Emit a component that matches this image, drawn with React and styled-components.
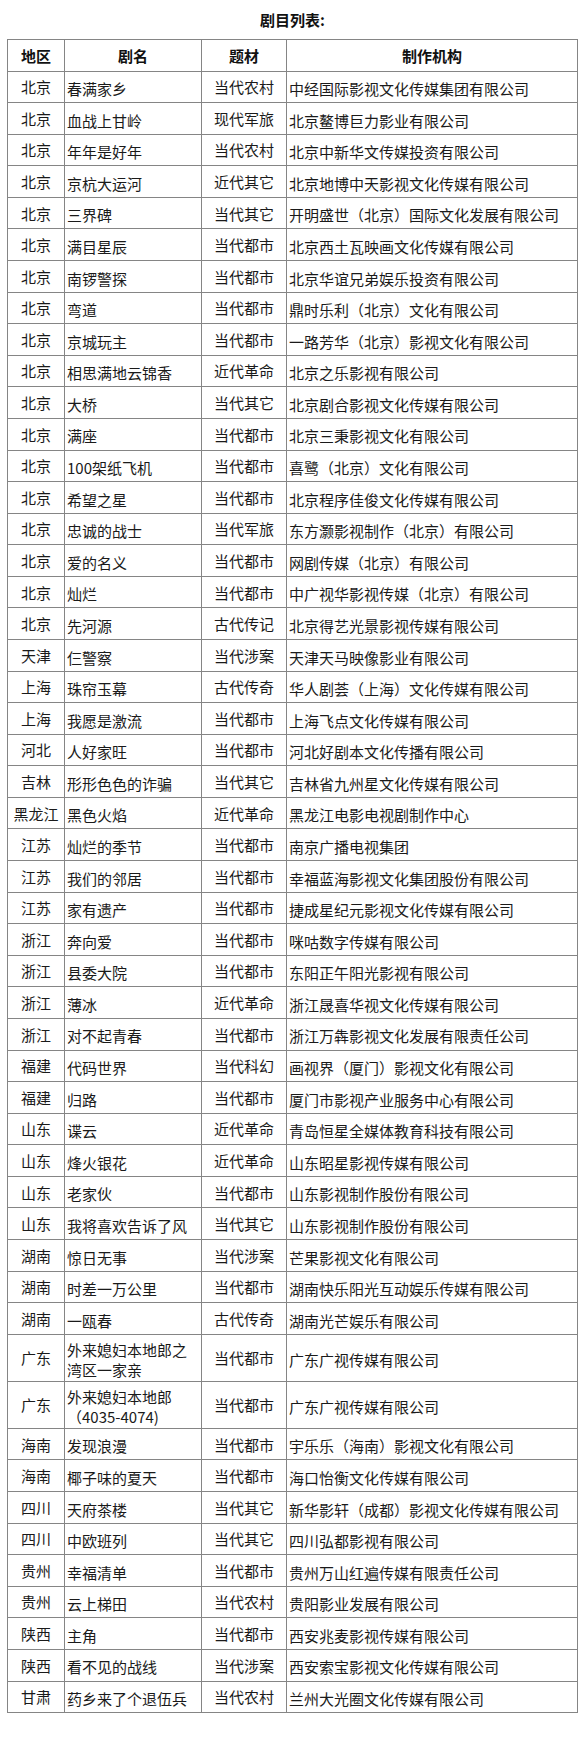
import React from "react";
import styled, { createGlobalStyle } from "styled-components";

const GlobalStyle = createGlobalStyle`
  html, body {
    margin: 0;
    padding: 0;
    background: #fff;
  }
  body {
    font-family: "Noto Sans CJK SC", "Noto Sans", "Liberation Sans", sans-serif;
    color: #1a1a1a;
  }
`;

const Page = styled.div`
  width: 585px;
  min-height: 1752px;
  background: #fff;
`;

const Title = styled.h2`
  margin: 0;
  padding: 10px 0 9px;
  font-size: 15px;
  line-height: 20px;
  font-weight: 700;
  text-align: center;
  color: #111;
`;

const Table = styled.table`
  width: 550px;
  margin: 0 auto;
  border-collapse: collapse;
  table-layout: fixed;
  font-size: 15px;
`;

const Th = styled.th`
  width: ${(p) => p.$w}px;
  border: 1px solid #858585;
  padding: 5.7px 2px;
  line-height: 19.2px;
  font-weight: 700;
  text-align: center;
  color: #111;
`;

const Td = styled.td`
  border: 1px solid #858585;
  padding: 5.7px ${(p) => (p.$align === "center" ? "2px" : "1px 2px")};
  padding-left: 2px;
  line-height: 19.2px;
  font-weight: 400;
  text-align: ${(p) => p.$align || "left"};
  vertical-align: middle;
  color: #1a1a1a;
`;

const columns = [
  { label: "地区", width: 52 },
  { label: "剧名", width: 132 },
  { label: "题材", width: 80 },
  { label: "制作机构", width: 286 },
];

const rows = [
  ["北京", "春满家乡", "当代农村", "中经国际影视文化传媒集团有限公司"],
  ["北京", "血战上甘岭", "现代军旅", "北京鳌博巨力影业有限公司"],
  ["北京", "年年是好年", "当代农村", "北京中新华文传媒投资有限公司"],
  ["北京", "京杭大运河", "近代其它", "北京地博中天影视文化传媒有限公司"],
  ["北京", "三界碑", "当代其它", "开明盛世（北京）国际文化发展有限公司"],
  ["北京", "满目星辰", "当代都市", "北京西土瓦映画文化传媒有限公司"],
  ["北京", "南锣警探", "当代都市", "北京华谊兄弟娱乐投资有限公司"],
  ["北京", "弯道", "当代都市", "鼎时乐利（北京）文化有限公司"],
  ["北京", "京城玩主", "当代都市", "一路芳华（北京）影视文化有限公司"],
  ["北京", "相思满地云锦香", "近代革命", "北京之乐影视有限公司"],
  ["北京", "大桥", "当代其它", "北京剧合影视文化传媒有限公司"],
  ["北京", "满座", "当代都市", "北京三秉影视文化有限公司"],
  ["北京", "100架纸飞机", "当代都市", "喜鹭（北京）文化有限公司"],
  ["北京", "希望之星", "当代都市", "北京程序佳俊文化传媒有限公司"],
  ["北京", "忠诚的战士", "当代军旅", "东方灏影视制作（北京）有限公司"],
  ["北京", "爱的名义", "当代都市", "网剧传媒（北京）有限公司"],
  ["北京", "灿烂", "当代都市", "中广视华影视传媒（北京）有限公司"],
  ["北京", "先河源", "古代传记", "北京得艺光景影视传媒有限公司"],
  ["天津", "仨警察", "当代涉案", "天津天马映像影业有限公司"],
  ["上海", "珠帘玉幕", "古代传奇", "华人剧荟（上海）文化传媒有限公司"],
  ["上海", "我愿是激流", "当代都市", "上海飞点文化传媒有限公司"],
  ["河北", "人好家旺", "当代都市", "河北好剧本文化传播有限公司"],
  ["吉林", "形形色色的诈骗", "当代其它", "吉林省九州星文化传媒有限公司"],
  ["黑龙江", "黑色火焰", "近代革命", "黑龙江电影电视剧制作中心"],
  ["江苏", "灿烂的季节", "当代都市", "南京广播电视集团"],
  ["江苏", "我们的邻居", "当代都市", "幸福蓝海影视文化集团股份有限公司"],
  ["江苏", "家有遗产", "当代都市", "捷成星纪元影视文化传媒有限公司"],
  ["浙江", "奔向爱", "当代都市", "咪咕数字传媒有限公司"],
  ["浙江", "县委大院", "当代都市", "东阳正午阳光影视有限公司"],
  ["浙江", "薄冰", "近代革命", "浙江晟喜华视文化传媒有限公司"],
  ["浙江", "对不起青春", "当代都市", "浙江万犇影视文化发展有限责任公司"],
  ["福建", "代码世界", "当代科幻", "画视界（厦门）影视文化有限公司"],
  ["福建", "归路", "当代都市", "厦门市影视产业服务中心有限公司"],
  ["山东", "谍云", "近代革命", "青岛恒星全媒体教育科技有限公司"],
  ["山东", "烽火银花", "近代革命", "山东昭星影视传媒有限公司"],
  ["山东", "老家伙", "当代都市", "山东影视制作股份有限公司"],
  ["山东", "我将喜欢告诉了风", "当代其它", "山东影视制作股份有限公司"],
  ["湖南", "惊日无事", "当代涉案", "芒果影视文化有限公司"],
  ["湖南", "时差一万公里", "当代都市", "湖南快乐阳光互动娱乐传媒有限公司"],
  ["湖南", "一瓯春", "古代传奇", "湖南光芒娱乐有限公司"],
  ["广东", "外来媳妇本地郎之湾区一家亲", "当代都市", "广东广视传媒有限公司"],
  ["广东", "外来媳妇本地郎（4035-4074)", "当代都市", "广东广视传媒有限公司"],
  ["海南", "发现浪漫", "当代都市", "宇乐乐（海南）影视文化有限公司"],
  ["海南", "椰子味的夏天", "当代都市", "海口怡衡文化传媒有限公司"],
  ["四川", "天府茶楼", "当代其它", "新华影轩（成都）影视文化传媒有限公司"],
  ["四川", "中欧班列", "当代其它", "四川弘都影视有限公司"],
  ["贵州", "幸福清单", "当代都市", "贵州万山红遍传媒有限责任公司"],
  ["贵州", "云上梯田", "当代农村", "贵阳影业发展有限公司"],
  ["陕西", "主角", "当代都市", "西安兆麦影视传媒有限公司"],
  ["陕西", "看不见的战线", "当代涉案", "西安索宝影视文化传媒有限公司"],
  ["甘肃", "药乡来了个退伍兵", "当代农村", "兰州大光圈文化传媒有限公司"],
];

const App = () => {
  return (
    <Page>
      <GlobalStyle />
      <Title>剧目列表:</Title>
      <Table>
        <thead>
          <tr>
            {columns.map((c) => (
              <Th key={c.label} $w={c.width}>
                {c.label}
              </Th>
            ))}
          </tr>
        </thead>
        <tbody>
          {rows.map(([region, name, genre, company], i) => (
            <tr key={i}>
              <Td $align="center">{region}</Td>
              <Td>{name}</Td>
              <Td $align="center">{genre}</Td>
              <Td>{company}</Td>
            </tr>
          ))}
        </tbody>
      </Table>
    </Page>
  );
};

export default App;
